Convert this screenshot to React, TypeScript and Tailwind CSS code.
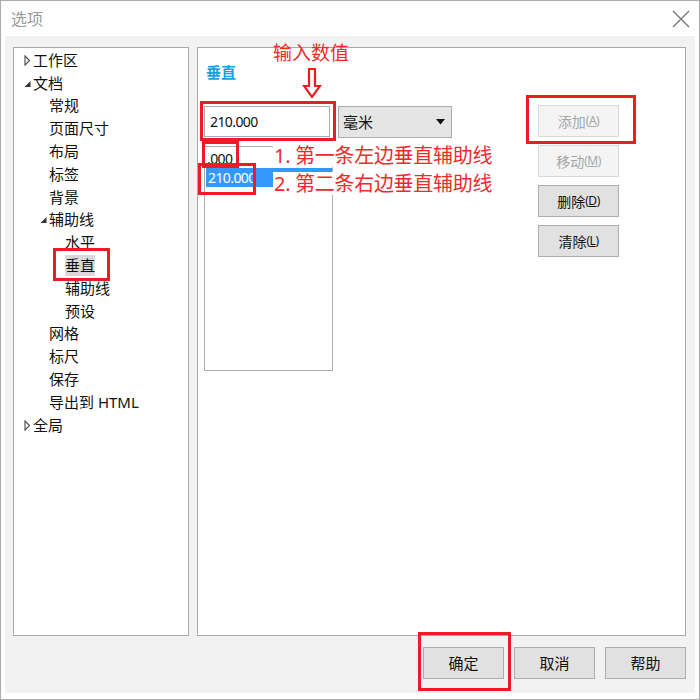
import React from 'react';

const font = { fontFamily: '"Noto Sans", "Noto Sans CJK SC", sans-serif' };

interface TreeItem {
  label: string;
  level: number;
  arrow?: 'open' | 'closed';
  selected?: boolean;
}

const tree: TreeItem[] = [
  { label: '工作区', level: 0, arrow: 'closed' },
  { label: '文档', level: 0, arrow: 'open' },
  { label: '常规', level: 1 },
  { label: '页面尺寸', level: 1 },
  { label: '布局', level: 1 },
  { label: '标签', level: 1 },
  { label: '背景', level: 1 },
  { label: '辅助线', level: 1, arrow: 'open' },
  { label: '水平', level: 2 },
  { label: '垂直', level: 2, selected: true },
  { label: '辅助线', level: 2 },
  { label: '预设', level: 2 },
  { label: '网格', level: 1 },
  { label: '标尺', level: 1 },
  { label: '保存', level: 1 },
  { label: '导出到 HTML', level: 1 },
  { label: '全局', level: 0, arrow: 'closed' },
];

const Arrow = ({ kind }: { kind: 'open' | 'closed' }) =>
  kind === 'closed' ? (
    <svg width="7" height="11" viewBox="0 0 7 11" className="shrink-0">
      <path d="M1 1 L5.5 5.5 L1 10 Z" fill="white" stroke="#555" strokeWidth="1.2" />
    </svg>
  ) : (
    <svg width="7" height="11" viewBox="0 0 7 11" className="shrink-0">
      <path d="M6.5 3 L6.5 9 L0.5 9 Z" fill="#333" />
    </svg>
  );

const indent = ['pl-[10px]', 'pl-[26px]', 'pl-[51px]'];

const SideButton = ({ label, k, disabled }: { label: string; k: string; disabled?: boolean }) => (
  <div
    className={`w-[81px] h-[32px] flex items-center justify-center text-[14px] border ${
      disabled ? 'bg-[#f4f4f4] border-[#d9d9d9] text-[#a6a6a6]' : 'bg-[#e1e1e1] border-[#adadad] text-[#111]'
    }`}
  >
    {label}
    <span className="text-[12px] tracking-[-0.5px]">
      (<span className="underline">{k}</span>)
    </span>
  </div>
);

const BottomButton = ({ label }: { label: string }) => (
  <div className="w-[81px] h-[32px] flex items-center justify-center text-[15px] bg-[#e1e1e1] border border-[#adadad] text-[#111]">
    {label}
  </div>
);

const RedBox = ({ className }: { className: string }) => (
  <div className={`absolute border-[3px] border-[#ec1c24] pointer-events-none ${className}`} />
);

export default function App() {
  return (
    <div className="relative w-[700px] h-[700px] bg-white border border-[#ababab] flex flex-col text-[#111]" style={font}>
      {/* Title bar */}
      <div className="h-[35px] flex items-center justify-between pl-[10px] pr-[9px] shrink-0">
        <span className="text-[16px] text-[#999]">选项</span>
        <svg width="18" height="18" viewBox="0 0 18 18">
          <path d="M1 1 L17 17 M17 1 L1 17" stroke="#777" strokeWidth="1.4" />
        </svg>
      </div>

      {/* Body */}
      <div className="flex-1 mx-[4px] mb-[6px] bg-[#f2f2f2] flex flex-col pt-[11px] pl-[8px] pr-[9px]">
        <div className="flex gap-[8px] h-[589px]">
          {/* Tree */}
          <div className="w-[176px] bg-white border border-[#a9a9a9] pt-[1px]">
            {tree.map((it, i) => (
              <div key={i} className={`h-[22.8px] flex items-center ${indent[it.level]}`}>
                {it.level !== 2 && (
                  <span className="w-[9px] shrink-0 flex items-center">{it.arrow && <Arrow kind={it.arrow} />}</span>
                )}
                <span className={`text-[15px] leading-[21px] ${it.selected ? 'bg-[#d9d9d9]' : ''}`}>{it.label}</span>
              </div>
            ))}
          </div>

          {/* Right panel */}
          <div className="flex-1 bg-white border border-[#a9a9a9] pl-[6px] pt-[14px]">
            <div className="text-[15px] font-bold text-[#1ba1e2] leading-[20px] pl-[2px]">垂直</div>
            <div className="flex mt-[24px]">
              <div className="w-[248px]">
                <div className="flex gap-[8px]">
                  <div className="w-[126px] h-[31px] border border-[#acacac] flex items-center pl-[5px] text-[14px] tracking-[-0.6px]">
                    210.000
                  </div>
                  <div className="w-[114px] h-[32px] bg-[#e5e5e5] border border-[#acacac] flex items-center justify-between pl-[4px] pr-[6px] text-[15px]">
                    <span>毫米</span>
                    <svg width="9" height="6" viewBox="0 0 9 6">
                      <path d="M0 0 L9 0 L4.5 5.5 Z" fill="#111" />
                    </svg>
                  </div>
                </div>
                <div className="mt-[8px] w-[129px] h-[225px] border border-[#acacac] pt-[2px] pl-[1px] text-[14px] tracking-[-0.6px]">
                  <div className="h-[19px] leading-[19px] pl-[1px]">.000</div>
                  <div className="h-[19px] leading-[19px] bg-[#3399ff] text-white pl-[2px]">210.000</div>
                </div>
              </div>
              <div className="ml-[86px] flex flex-col gap-[8px] -mt-[1px]">
                <SideButton label="添加" k="A" disabled />
                <SideButton label="移动" k="M" disabled />
                <SideButton label="删除" k="D" />
                <SideButton label="清除" k="L" />
              </div>
            </div>
          </div>
        </div>

        {/* Bottom buttons */}
        <div className="flex justify-end gap-[10px] mt-[11px]">
          <BottomButton label="确定" />
          <BottomButton label="取消" />
          <BottomButton label="帮助" />
        </div>
      </div>

      {/* Annotations */}
      <div className="absolute left-[272px] top-[40px] text-[19px] leading-[24px] text-[#f02a2a]">输入数值</div>
      <svg className="absolute left-[301px] top-[66px]" width="20" height="33" viewBox="0 0 20 33">
        <path d="M7 2 L13 2 L13 19 L18 19 L10 30 L2 19 L7 19 Z" fill="none" stroke="#ec1c24" strokeWidth="2.2" />
      </svg>
      <div className="absolute left-[272px] top-[143px] bg-white px-[1px] text-[20px] leading-[23px] text-[#f02a2a] tracking-[-0.3px]">
        1. 第一条左边垂直辅助线
      </div>
      <div className="absolute left-[272px] top-[171px] bg-white px-[1px] text-[20px] leading-[23px] text-[#f02a2a] tracking-[-0.3px]">
        2. 第二条右边垂直辅助线
      </div>

      <RedBox className="left-[52px] top-[247px] w-[57px] h-[33px]" />
      <RedBox className="left-[199px] top-[100px] w-[136px] h-[40px]" />
      <RedBox className="left-[201px] top-[140px] w-[37px] h-[27px]" />
      <RedBox className="left-[197px] top-[162px] w-[58px] h-[32px]" />
      <RedBox className="left-[525px] top-[94px] w-[110px] h-[49px]" />
      <RedBox className="left-[417px] top-[631px] w-[93px] h-[59px]" />
    </div>
  );
}
